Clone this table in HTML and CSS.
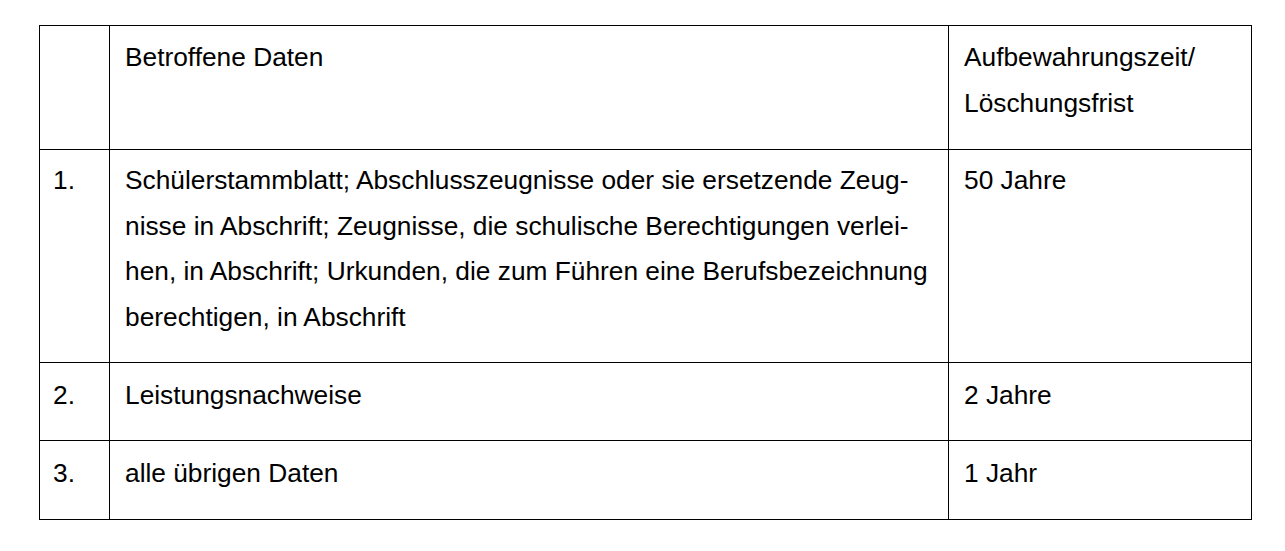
FILE: index.html
```html
<!DOCTYPE html>
<html lang="de">
<head>
<meta charset="utf-8">
<link rel="stylesheet" href="styles.css">
</head>
<body>
<table class="grid">
  <colgroup>
    <col class="c-num">
    <col class="c-data">
    <col class="c-time">
  </colgroup>
  <tr class="r-head">
    <td></td>
    <td>Betroffene Daten</td>
    <td>Aufbewahrungszeit/<br>Löschungsfrist</td>
  </tr>
  <tr class="r-one">
    <td>1.</td>
    <td>Schülerstammblatt; Abschlusszeugnisse oder sie ersetzende Zeug-<br>nisse in Abschrift; Zeugnisse, die schulische Berechtigungen verlei-<br>hen, in Abschrift; Urkunden, die zum Führen eine Berufsbezeichnung<br>berechtigen, in Abschrift</td>
    <td>50 Jahre</td>
  </tr>
  <tr class="r-two">
    <td>2.</td>
    <td>Leistungsnachweise</td>
    <td>2 Jahre</td>
  </tr>
  <tr class="r-three">
    <td>3.</td>
    <td>alle übrigen Daten</td>
    <td>1 Jahr</td>
  </tr>
</table>
</body>
</html>
```
FILE: styles.css
```css
html, body {
  margin: 0;
  padding: 0;
  background: #fff;
}
body {
  padding: 25px 0 0 39px;
  font-family: "Liberation Sans", Arial, sans-serif;
  color: #000;
}
.grid {
  border-collapse: collapse;
  table-layout: fixed;
  width: 1212px;
  font-size: 26.3px;
  line-height: 45.5px;
}
.c-num { width: 70px; }
.c-data { width: 839px; }
.c-time { width: 303px; }
.grid td {
  border: 1px solid #000;
  vertical-align: top;
  padding: 8px 12px 0 15px;
  white-space: nowrap;
}
.grid td:first-child {
  padding-left: 13px;
}
.r-head td { height: 114px; padding-top: 9px; }
.r-one td { height: 204px; }
.r-two td { height: 67px; padding-top: 10px; }
.r-three td { height: 68px; padding-top: 10px; }
```
